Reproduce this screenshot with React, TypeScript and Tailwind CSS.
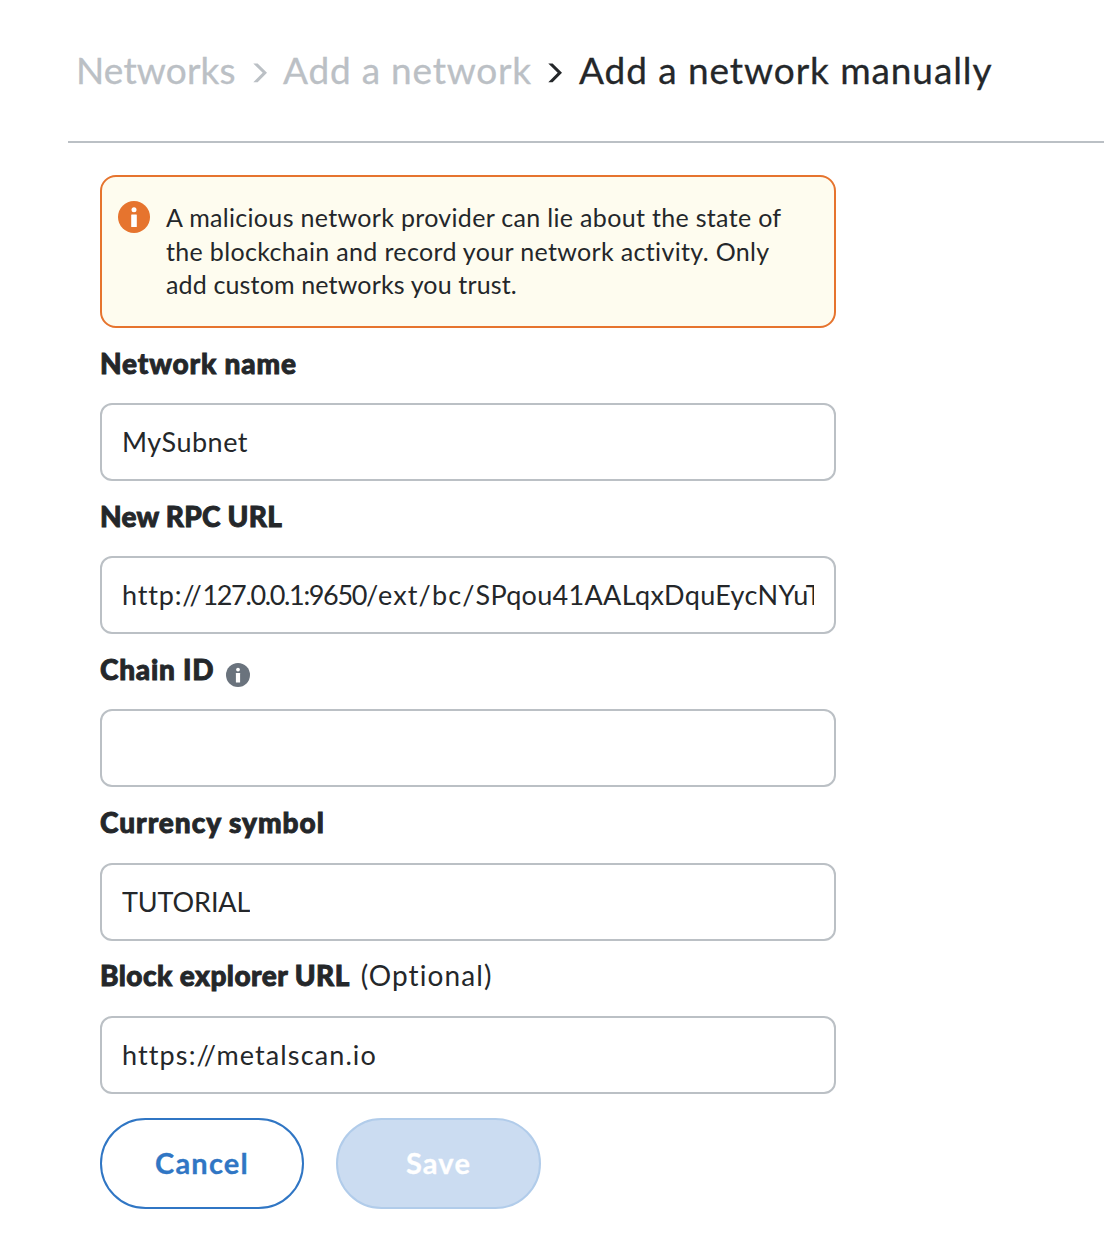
import type { ReactNode } from "react";

function InfoIcon({ className }: { className: string }) {
  return (
    <svg viewBox="0 0 32 32" className={className} aria-hidden="true">
      <circle cx="16" cy="16" r="16" fill="currentColor" />
      <circle cx="16" cy="8.7" r="2.5" fill="#fff" />
      <rect x="13.2" y="13.4" width="5.6" height="12.6" rx="0.5" fill="#fff" />
    </svg>
  );
}

function Chevron({ className }: { className: string }) {
  return (
    <svg viewBox="0 0 14 20" className={className} aria-hidden="true">
      <path d="M0.3 0.5H4.6L14 9.8L4.6 19.3H0.3L9.7 9.8Z" fill="currentColor" />
    </svg>
  );
}

interface FieldProps {
  label: string;
  labelClass: string;
  value: ReactNode;
  valueClass?: string;
  extra?: ReactNode;
}

function Field({ label, labelClass, value, valueClass = "", extra }: FieldProps) {
  return (
    <div className="h-[153.2px]">
      <div className="flex h-[75px] items-start pt-[16.6px] text-[28px] leading-[36px] whitespace-nowrap">
        <span className={`font-black [-webkit-text-stroke:0.9px_currentColor] ${labelClass}`}>{label}</span>
        {extra}
      </div>
      <div className="flex h-[78px] items-center rounded-[12px] border-2 border-[#bbc0c5] px-5 text-[27px] leading-[40px]">
        <div className={`overflow-hidden whitespace-nowrap ${valueClass}`}>{value}</div>
      </div>
    </div>
  );
}

export default function App() {
  return (
    <div className="h-[1254px] w-[1104px] overflow-hidden bg-white font-['Lato',sans-serif] text-[#24272a]">
      <header className="ml-[68px] flex h-[143px] items-start border-b-2 border-[#bbc0c5] pt-[45px] pl-[8px] text-[37px] leading-[49px] whitespace-nowrap [-webkit-text-stroke:0.3px_currentColor]">
        <span className="w-[177px] tracking-[0.15px] text-[#bbc0c5]">Networks</span>
        <Chevron className="mt-[18px] h-[20px] w-[14px] text-[#bbc0c5]" />
        <span className="ml-[16px] w-[265px] tracking-[0.78px] text-[#bbc0c5]">Add a network</span>
        <Chevron className="mt-[18px] h-[20px] w-[14px]" />
        <span className="ml-[17px] tracking-[0.92px]">Add a network manually</span>
      </header>
      <main className="ml-[100px] w-[736px]">
        <div className="mt-8 flex h-[153px] rounded-[16px] border-2 border-[#e6742e] bg-[#fefcef] pt-6 pl-4">
          <InfoIcon className="h-8 w-8 shrink-0 text-[#e6742e]" />
          <p className="ml-4 text-[25px] leading-[33.5px] whitespace-nowrap">
            <span className="block tracking-[0.32px]">A malicious network provider can lie about the state of</span>
            <span className="block tracking-[0.34px]">the blockchain and record your network activity. Only</span>
            <span className="block tracking-[0.15px]">add custom networks you trust.</span>
          </p>
        </div>
        <Field label="Network name" labelClass="tracking-[0.85px]" value="MySubnet" valueClass="tracking-[0.5px]" />
        <Field
          label="New RPC URL"
          labelClass="tracking-[0.25px]"
          value={
            <>
              <span className="tracking-[0.85px]">http://</span>
              <span className="tracking-[-1.35px]">127.0.0.1:9650</span>
              <span className="tracking-[1.1px]">/ext/bc/</span>
              <span className="tracking-[0.3px]">SPqou41AALqxDquEycNYuT</span>
            </>
          }
        />
        <Field
          label="Chain ID"
          labelClass="tracking-[0.75px]"
          value=""
          extra={<InfoIcon className="mt-[12.4px] ml-3 h-6 w-6 text-[#6a737d]" />}
        />
        <Field label="Currency symbol" labelClass="tracking-[0.98px]" value="TUTORIAL" valueClass="tracking-[-0.1px]" />
        <Field
          label="Block explorer URL"
          labelClass="tracking-[0.45px]"
          value="https://metalscan.io"
          valueClass="tracking-[1.12px]"
          extra={<span className="ml-[11px] tracking-[1.1px]">(Optional)</span>}
        />
        <div className="mt-6 flex gap-8 text-[29px] font-bold tracking-[1.2px]">
          <button className="h-[91px] w-[204px] rounded-full border-2 border-[#3076c4] pb-px text-[#3076c4] [-webkit-text-stroke:0.3px_currentColor]">Cancel</button>
          <button className="h-[91px] w-[205px] rounded-full border-2 border-[#b1ccea] bg-[#cbdcf1] pb-px text-white [-webkit-text-stroke:0.3px_currentColor]">Save</button>
        </div>
      </main>
    </div>
  );
}
